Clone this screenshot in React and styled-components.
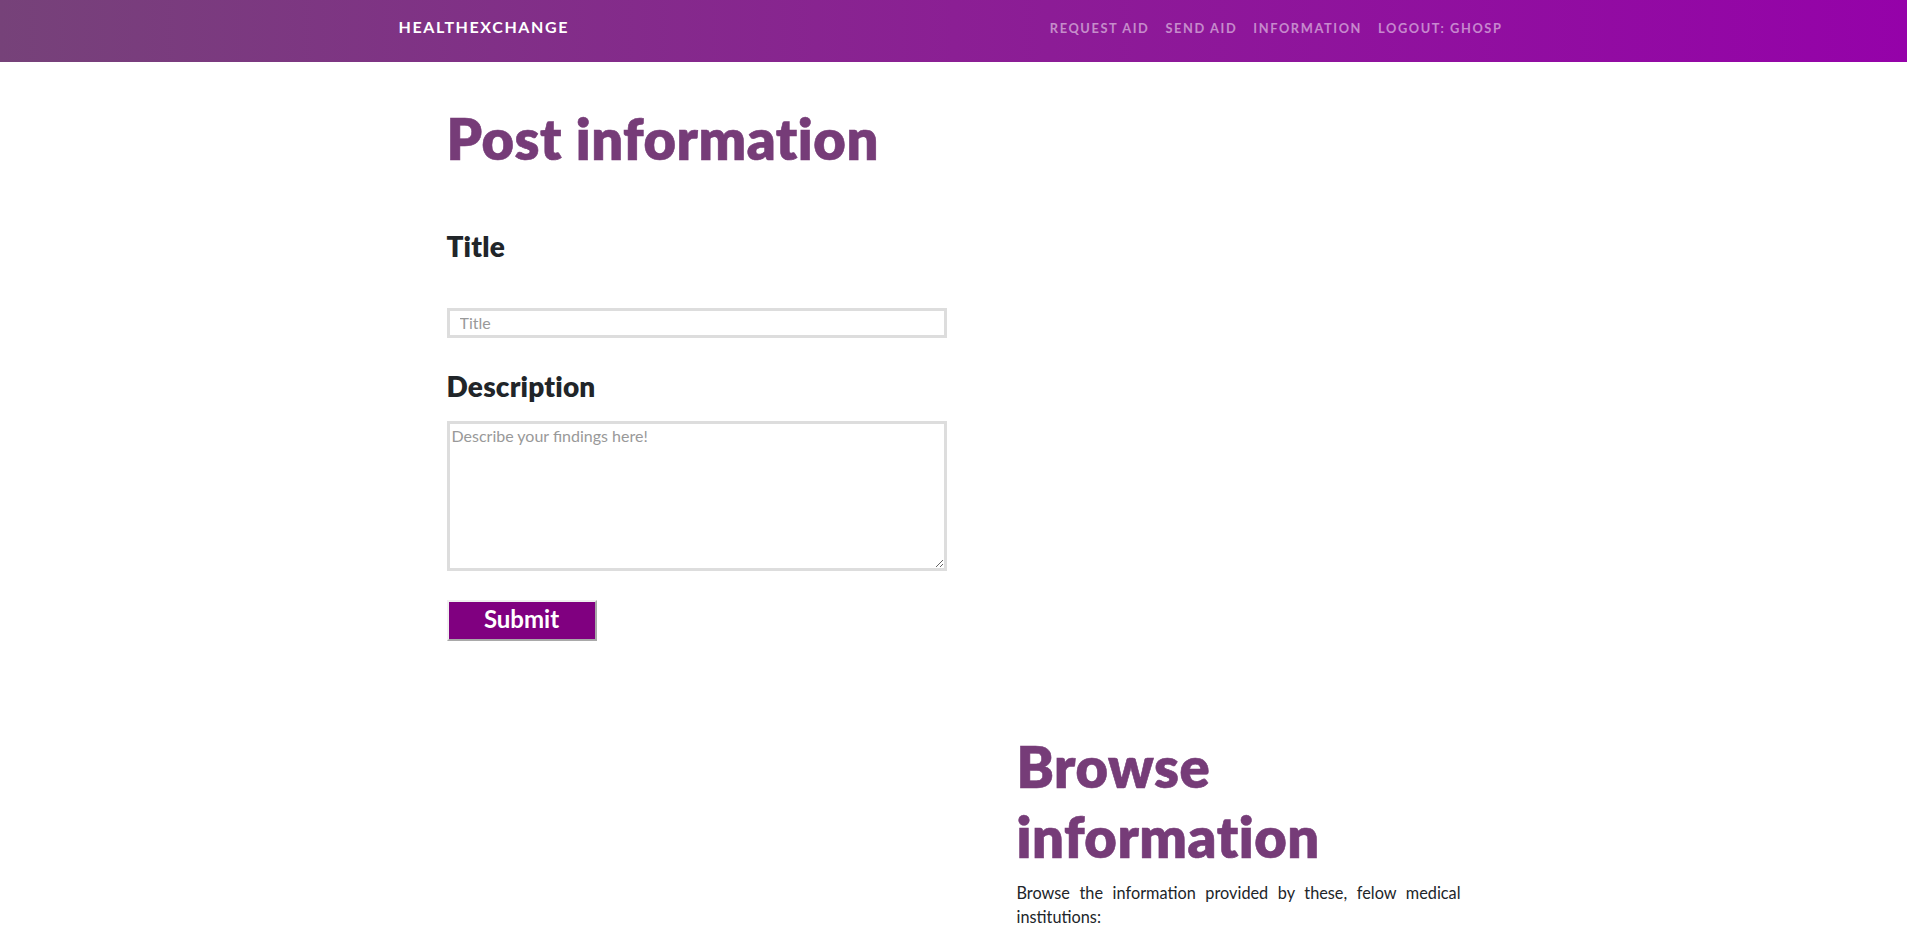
import React from 'react';
import styled, { createGlobalStyle } from 'styled-components';

const GlobalStyle = createGlobalStyle`
  body {
    margin: 0;
    font-family: 'Lato', 'Liberation Sans', sans-serif;
    font-size: 16px;
    line-height: 1.5;
    color: #212529;
    background: #fff;
  }
  * {
    box-sizing: border-box;
  }
`;

const Navbar = styled.nav`
  height: 62px;
  background: linear-gradient(to right, #764279, #8b1f94 50%, #9502a9);
`;

const NavInner = styled.div`
  max-width: 1140px;
  margin: 0 auto;
  padding: 15px 15px 0;
  display: flex;
  align-items: baseline;
`;

const Brand = styled.a`
  color: #fff;
  text-decoration: none;
  text-transform: uppercase;
  font-size: 16px;
  font-weight: 700;
  letter-spacing: 0.1rem;
  line-height: 24px;
`;

const NavList = styled.ul`
  margin: 0 -2px 0 auto;
  padding: 0;
  list-style: none;
  display: flex;
`;

const NavLink = styled.a`
  display: block;
  padding: 0 8px;
  color: rgba(255, 255, 255, 0.5);
  text-decoration: none;
  text-transform: uppercase;
  font-size: 12.8px;
  font-weight: 700;
  letter-spacing: 0.1rem;
`;

const Container = styled.div`
  max-width: 1140px;
  margin: 0 auto;
`;

const Section = styled.section`
  display: grid;
  grid-template-columns: 1fr 1fr;
`;

// bootstrap col padding (15) + p-5 (48)
const Column = styled.div`
  padding: ${(p) => p.$top || 0}px 63px ${(p) => p.$bottom || 0}px;
`;

const Heading = styled.h2`
  margin: 0 0 9px;
  font-size: 56px;
  line-height: 70px;
  font-weight: 800;
  letter-spacing: 0.55px;
  -webkit-text-stroke: 0.6px #763c78;
  color: #763c78;
`;

const FieldLabel = styled.h3`
  margin: ${(p) => p.$top}px 0 ${(p) => p.$bottom}px;
  font-size: 28px;
  line-height: 33.6px;
  font-weight: 800;
  letter-spacing: 0.2px;
  color: #212529;
`;

const TextInput = styled.input`
  display: block;
  width: 500px;
  height: 30px;
  padding: 0 10px;
  border: 3px solid #dddddd;
  font-family: 'Lato', sans-serif;
  font-size: 16px;
  outline: none;

  &::placeholder {
    color: #999;
  }
`;

const TextArea = styled.textarea`
  display: block;
  width: 500px;
  height: 150px;
  padding: 2px;
  border: 3px solid #dddddd;
  font-family: 'Lato', sans-serif;
  font-size: 16px;
  line-height: 1.2;
  outline: none;

  &::placeholder {
    color: #999;
  }
`;

const SubmitButton = styled.button`
  display: block;
  margin-top: 29px;
  width: 150px;
  height: 41px;
  padding: 0 0 4px;
  background: #800080;
  color: #fff;
  font-family: 'Lato', sans-serif;
  font-size: 24px;
  font-weight: 700;
  border-style: solid;
  border-width: 2px;
  border-color: #f0f0f0 #a9a9a9 #a9a9a9 #f0f0f0;
  cursor: pointer;
`;

const Lead = styled.p`
  margin: 0;
  font-size: 16.3px;
  line-height: 24px;
  text-align: justify;
`;

const links = ['Request aid', 'Send aid', 'Information', 'Logout: ghosp'];

export default function App() {
  return (
    <>
      <GlobalStyle />
      <Navbar>
        <NavInner>
          <Brand href="#">HealthExchange</Brand>
          <NavList>
            {links.map((l) => (
              <li key={l}>
                <NavLink href="#">{l}</NavLink>
              </li>
            ))}
          </NavList>
        </NavInner>
      </Navbar>

      <Container>
        <Section>
          <Column $top={42} $bottom={48}>
            <Heading>Post information</Heading>
            <form onSubmit={(e) => e.preventDefault()}>
              <FieldLabel $top={56} $bottom={44}>Title</FieldLabel>
              <TextInput type="text" placeholder="Title" />
              <FieldLabel $top={32} $bottom={18}>Description</FieldLabel>
              <TextArea placeholder="Describe your findings here!" />
              <SubmitButton type="submit">Submit</SubmitButton>
            </form>
          </Column>
          <div />
        </Section>

        <Section>
          <div />
          <Column $top={43}>
            <Heading>Browse information</Heading>
            <Lead>
              Browse the information provided by these, felow medical institutions:
            </Lead>
          </Column>
        </Section>
      </Container>
    </>
  );
}
